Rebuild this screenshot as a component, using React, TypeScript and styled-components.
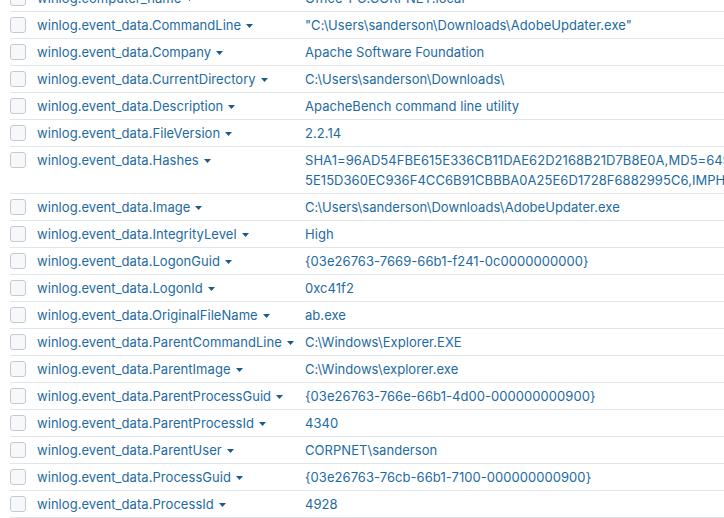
import React from "react";
import styled, { createGlobalStyle } from "styled-components";

const GlobalStyle = createGlobalStyle`
  html, body {
    margin: 0;
    padding: 0;
    overflow: hidden;
    background: #fff;
  }
  body {
    font-family: Inter, "Open Sans", sans-serif;
    font-size: 13px;
    color: #1d6aa1;
  }
`;

const Viewport = styled.div`
  width: 724px;
  height: 518px;
  overflow: hidden;
`;

const Table = styled.div`
  margin: -15px 0 0 10px;
  width: 1300px;
`;

const Row = styled.div`
  display: grid;
  grid-template-columns: 27px 268px 1000px;
  align-items: start;
  padding: 3px 0;
  line-height: 20px;
  border-bottom: 1px solid #e1e5ea;
`;

const Checkbox = styled.span`
  display: block;
  box-sizing: border-box;
  width: 16px;
  height: 16px;
  margin-top: 2px;
  border: 1px solid #c3cad2;
  border-radius: 3px;
  background: #f7f8fa;
`;

const FieldName = styled.div`
  display: flex;
  align-items: center;
  gap: 5px;
  letter-spacing: 0.05px;
  white-space: nowrap;
`;

const Caret = styled.svg`
  width: 7px;
  height: 4px;
  margin-top: 1px;
  fill: #1b5a8a;
`;

const Value = styled.div`
  letter-spacing: 0.05px;
  white-space: normal;
`;

type Field = { name: string; value: React.ReactNode };

const fields: Field[] = [
  { name: "winlog.computer_name", value: "Office-PC.CORPNET.local" },
  { name: "winlog.event_data.CommandLine", value: "\"C:\\Users\\sanderson\\Downloads\\AdobeUpdater.exe\"" },
  { name: "winlog.event_data.Company", value: "Apache Software Foundation" },
  { name: "winlog.event_data.CurrentDirectory", value: "C:\\Users\\sanderson\\Downloads\\" },
  { name: "winlog.event_data.Description", value: "ApacheBench command line utility" },
  { name: "winlog.event_data.FileVersion", value: "2.2.14" },
  {
    name: "winlog.event_data.Hashes",
    value: (
      <>
        SHA1=96AD54FBE615E336CB11DAE62D2168B21D7B8E0A,MD5=649F1A7C3D0B8E52A4F6C9D17E203B58,SHA256=8C2D41F07A93BE61D
        <wbr />
        5E15D360EC936F4CC6B91CBBBA0A25E6D1728F6882995C6,IMPHASH=2C3F6A9B41D87E05F1A2B3C4D5E6F708
      </>
    ),
  },
  { name: "winlog.event_data.Image", value: "C:\\Users\\sanderson\\Downloads\\AdobeUpdater.exe" },
  { name: "winlog.event_data.IntegrityLevel", value: "High" },
  { name: "winlog.event_data.LogonGuid", value: "{03e26763-7669-66b1-f241-0c0000000000}" },
  { name: "winlog.event_data.LogonId", value: "0xc41f2" },
  { name: "winlog.event_data.OriginalFileName", value: "ab.exe" },
  { name: "winlog.event_data.ParentCommandLine", value: "C:\\Windows\\Explorer.EXE" },
  { name: "winlog.event_data.ParentImage", value: "C:\\Windows\\explorer.exe" },
  { name: "winlog.event_data.ParentProcessGuid", value: "{03e26763-766e-66b1-4d00-000000000900}" },
  { name: "winlog.event_data.ParentProcessId", value: "4340" },
  { name: "winlog.event_data.ParentUser", value: "CORPNET\\sanderson" },
  { name: "winlog.event_data.ProcessGuid", value: "{03e26763-76cb-66b1-7100-000000000900}" },
  { name: "winlog.event_data.ProcessId", value: "4928" },
];

function FieldRow({ field }: { field: Field }) {
  return (
    <Row>
      <Checkbox role="checkbox" aria-checked="false" />
      <FieldName>
        {field.name}
        <Caret viewBox="0 0 7 4">
          <polygon points="0,0 7,0 3.5,4" />
        </Caret>
      </FieldName>
      <Value>{field.value}</Value>
    </Row>
  );
}

export default function App() {
  return (
    <Viewport>
      <GlobalStyle />
      <Table>
        {fields.map((f) => (
          <FieldRow key={f.name} field={f} />
        ))}
      </Table>
    </Viewport>
  );
}
